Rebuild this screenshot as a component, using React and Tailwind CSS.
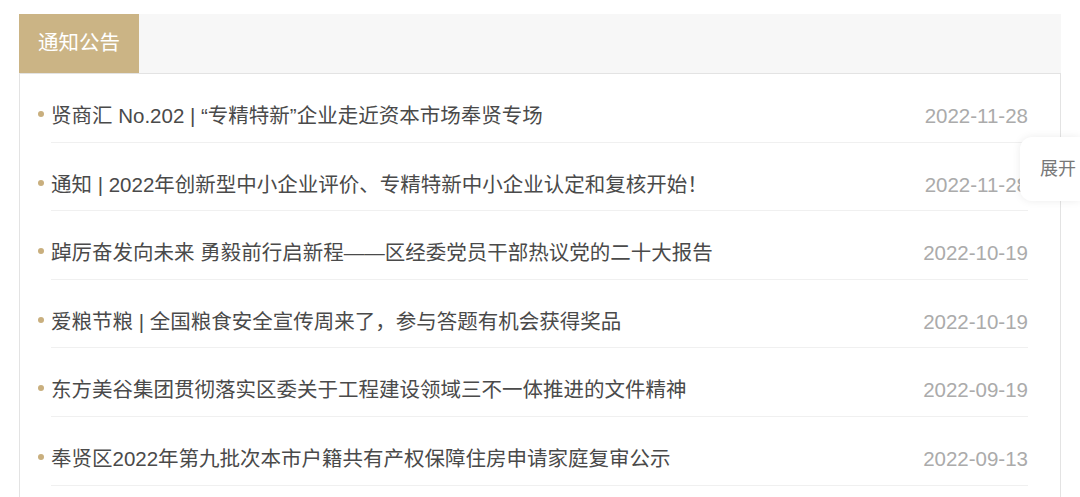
import React from "react";

const items = [
  ["贤商汇 No.202 | “专精特新”企业走近资本市场奉贤专场", "2022-11-28"],
  ["通知 | 2022年创新型中小企业评价、专精特新中小企业认定和复核开始！", "2022-11-28"],
  ["踔厉奋发向未来 勇毅前行启新程——区经委党员干部热议党的二十大报告", "2022-10-19"],
  ["爱粮节粮 | 全国粮食安全宣传周来了，参与答题有机会获得奖品", "2022-10-19"],
  ["东方美谷集团贯彻落实区委关于工程建设领域三不一体推进的文件精神", "2022-09-19"],
  ["奉贤区2022年第九批次本市户籍共有产权保障住房申请家庭复审公示", "2022-09-13"],
];

export default function App() {
  return (
    <div
      className="relative h-[497px] bg-white pt-[14px] pl-[19px] pr-[19px] overflow-hidden"
      style={{ fontFamily: '"Liberation Sans", "Noto Sans CJK SC", sans-serif' }}
    >
      <div className="flex h-full w-[1042px] flex-col">
        <div className="flex h-[60px] shrink-0 bg-[#f7f7f7] border-b border-[#e3e3e3]">
          <div className="flex w-[120px] items-center justify-center bg-[#cbb485] text-[20.5px] text-white">
            通知公告
          </div>
        </div>
        <ul className="flex-1 border-x border-[#e3e3e3] pl-[31px] pr-[32px]">
          {items.map(([title, date], i) => (
            <li
              key={i}
              className="relative flex h-[68.6px] items-start justify-between border-b border-[#f0f0f0] pt-[29px] text-[20.5px] leading-[26px]"
            >
              <span className="absolute left-[-13.5px] top-[37px] h-[6px] w-[6px] rounded-full bg-[#c9af7e]" />
              <span className="text-[#4a4a4a]">{title}</span>
              <span className="text-[#ababab]">{date}</span>
            </li>
          ))}
        </ul>
      </div>
      <div className="absolute right-0 top-[137px] flex h-[64px] w-[60px] items-center rounded-l-[12px] bg-white pl-[20px] text-[18px] text-[#777] shadow-[0_0_8px_rgba(0,0,0,0.08)]">
        展开
      </div>
    </div>
  );
}
